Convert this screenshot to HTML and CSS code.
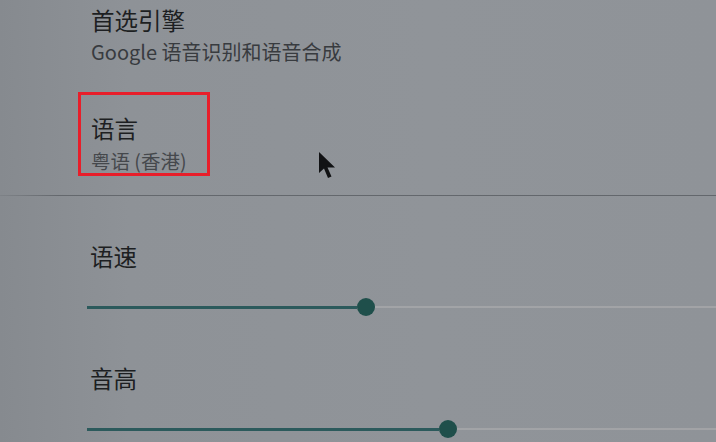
FILE: index.html
```html
<!DOCTYPE html>
<html lang="zh-CN">
<head>
<meta charset="utf-8">
<title>文字转语音设置</title>
<link rel="stylesheet" href="styles.css">
</head>
<body>
<div class="screen">
  <div class="prefs">
    <div class="item first">
      <div class="title">首选引擎</div>
      <div class="summary">Google 语音识别和语音合成</div>
    </div>
    <div class="item highlight">
      <div class="title">语言</div>
      <div class="summary">粤语 (香港)</div>
    </div>
  </div>
  <div class="divider"></div>
  <div class="sliders">
    <div class="slider-pref">
      <div class="title">语速</div>
      <div class="slider">
        <div class="active" style="width:270px"></div>
        <div class="thumb"></div>
        <div class="inactive"></div>
      </div>
    </div>
    <div class="slider-pref second">
      <div class="title">音高</div>
      <div class="slider">
        <div class="active" style="width:352px"></div>
        <div class="thumb"></div>
        <div class="inactive"></div>
      </div>
    </div>
  </div>
  <svg class="cursor" width="19" height="29" viewBox="0 0 19 29">
    <path d="M1 1 L1 22 L6 17.5 L10 27 L13.5 25.5 L9.5 16.5 L17 16.5 Z" fill="#111214"/>
  </svg>
</div>
</body>
</html>
```

FILE: styles.css
```css
html, body {
  margin: 0;
  padding: 0;
}
body {
  width: 716px;
  height: 442px;
  overflow: hidden;
  font-family: "Noto Sans CJK SC", "Noto Sans", sans-serif;
  background: #8e9297;
}
.screen {
  position: relative;
  width: 716px;
  height: 442px;
  background: linear-gradient(90deg, #868a8f 0%, #8e9297 18%, #909499 60%, #8f9398 100%);
}
.prefs {
  padding-left: 91px;
  padding-top: 4px;
}
.title {
  font-size: 23.5px;
  line-height: 32px;
  color: #1d1f22;
}
.summary {
  font-size: 20px;
  line-height: 32px;
  color: #383b3f;
}
.highlight {
  margin-top: 24px;
  margin-left: -13px;
  width: 132px;
  box-sizing: border-box;
  border: 3px solid #e81e2a;
  padding: 19px 0 0 10px;
  height: 84px;
}
.highlight .title {
  line-height: 28px;
}
.highlight .summary {
  margin-top: 7px;
  line-height: 24px;
  font-size: 19.5px;
  color: #45484c;
}
.divider {
  margin-top: 19px;
  height: 1px;
  background: linear-gradient(90deg, rgba(95,99,104,0.2) 0%, #64686d 8%, #63676c 100%);
}
.sliders {
  padding-left: 87px;
}
.slider-pref .title {
  padding-left: 3px;
  line-height: 30px;
  margin-top: 45px;
}
.slider-pref.second .title {
  margin-top: 46px;
}
.slider {
  margin-top: 26px;
  height: 20px;
  display: flex;
  align-items: center;
}
.active {
  height: 3px;
  background: #2c5a5c;
  flex: none;
}
.thumb {
  flex: none;
  width: 18px;
  height: 18px;
  border-radius: 50%;
  background: #1f4f4b;
}
.inactive {
  flex: 1;
  height: 2px;
  background: #a6a8aa;
  opacity: 0.8;
}
.cursor {
  position: absolute;
  left: 318px;
  top: 151px;
}
```
